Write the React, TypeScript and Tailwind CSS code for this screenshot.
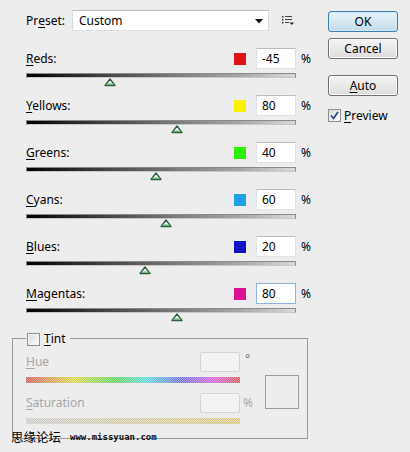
import React from "react";

type Row = { key: string; rest: string; color: string; value: number; focus?: boolean };

const rows: Row[] = [
  { key: "R", rest: "eds:", color: "#e01212", value: -45 },
  { key: "Y", rest: "ellows:", color: "#f6f200", value: 80 },
  { key: "G", rest: "reens:", color: "#2ef00a", value: 40 },
  { key: "C", rest: "yans:", color: "#1fa3e2", value: 60 },
  { key: "B", rest: "lues:", color: "#0c12c6", value: 20 },
  { key: "M", rest: "agentas:", color: "#dc1090", value: 80, focus: true },
];

function Thumb() {
  return (
    <svg width="12" height="9" viewBox="0 0 12 9">
      <path d="M6 1 L1 7.5 L11 7.5 Z" fill="#eef6ee" stroke="#2f5e3e" strokeWidth="1.3" strokeLinejoin="round" />
      <path d="M3 5.6 L9 5.6 L10 6.9 L2 6.9 Z" fill="#6fb87a" />
    </svg>
  );
}

function SliderRow({ r }: { r: Row }) {
  const left = ((r.value + 200) / 500) * 270 - 6;
  return (
    <div className="h-[47px] ml-[26px] pt-[1px]">
      <div className="flex items-center h-[21px]">
        <div className="w-[208px] text-black">
          <span className="underline underline-offset-2">{r.key}</span>
          {r.rest}
        </div>
        <div className="w-[12px] h-[12px]" style={{ backgroundColor: r.color }} />
        <div
          className={
            "ml-[10px] w-[40px] h-[21px] bg-white border flex items-center pl-[5px] " +
            (r.focus ? "border-[#8fb3dc]" : "border-[#dfe3e8] border-t-[#b8bcc2]")
          }
        >
          {r.value}
        </div>
        <div className="ml-[5px]">%</div>
      </div>
      <div className="relative mt-[4px] w-[270px] h-[5px] border border-[#8a8a8a] border-b-[#c8c8c8] bg-[linear-gradient(to_right,#000000,#3a3a3a_25%,#7a7a7a_55%,#a8a8a8_80%,#dadada)]">
        <div className="absolute top-[4px] leading-none" style={{ left: left - 1 }}>
          <Thumb />
        </div>
      </div>
    </div>
  );
}

function Button({ children, primary }: { children: React.ReactNode; primary?: boolean }) {
  return (
    <div
      className={
        "w-[70px] h-[21px] rounded-[3px] border flex items-center justify-center text-black " +
        (primary
          ? "border-[#3c7fb1] bg-[linear-gradient(to_bottom,#eaf3f9,#d6e7f2_50%,#c3dcec)] shadow-[inset_0_0_0_1px_#cfe9f7]"
          : "border-[#707070] bg-[linear-gradient(to_bottom,#f4f4f4,#e9e9e9_50%,#dcdcdc)] shadow-[inset_0_0_0_1px_#fbfbfb]")
      }
    >
      {children}
    </div>
  );
}

export default function App() {
  return (
    <div className="relative w-[410px] h-[452px] overflow-hidden bg-[#ededed] font-['Segoe_UI','Noto_Sans',sans-serif] text-[12px] text-black leading-none">
      <div className="flex items-start">
        {/* left */}
        <div className="w-[318px] shrink-0">
          <div className="h-[47px] pt-[10px] pl-[26px] flex items-start">
            <div className="h-[21px] flex items-center w-[46px]">
              Pr<span className="underline underline-offset-2">e</span>set:
            </div>
            <div className="w-[197px] h-[21px] bg-white border border-[#dadde2] border-t-[#b9bdc3] flex items-center pl-[6px] relative">
              Custom
              <svg className="absolute right-[5px] top-[8px]" width="8" height="5" viewBox="0 0 8 5">
                <path d="M0 0 L8 0 L4 4.5 Z" fill="#111" />
              </svg>
            </div>
            <div className="ml-[13px] mt-[5px]">
              <svg width="12" height="11" viewBox="0 0 12 11">
                <rect x="0" y="1" width="1.5" height="1.5" fill="#333" />
                <rect x="3" y="1" width="7" height="1" fill="#444" />
                <rect x="0" y="4" width="1.5" height="1.5" fill="#333" />
                <rect x="3" y="4" width="7" height="1" fill="#444" />
                <rect x="0" y="7" width="1.5" height="1.5" fill="#333" />
                <rect x="3" y="7" width="4" height="1" fill="#444" />
                <path d="M7.5 7.5 L12 7.5 L9.75 10 Z" fill="#222" />
              </svg>
            </div>
          </div>

          {rows.map((r) => (
            <SliderRow key={r.key} r={r} />
          ))}

          {/* Tint group */}
          <div className="relative ml-[12px] mt-[9px] w-[296px] h-[101px] border border-[#999999]">
            <div className="absolute -top-[7px] left-[13px] bg-[#ededed] flex items-center pr-[4px] pl-[1px] h-[14px]">
              <div className="w-[13px] h-[13px] border border-[#8e8f8f] bg-[linear-gradient(135deg,#dcdcdc,#fbfbfb)] shadow-[inset_0_0_0_1px_#f4f4f4]" />
              <div className="ml-[4px]">
                <span className="underline underline-offset-2">T</span>int
              </div>
            </div>
            <div className="flex pl-[13px] pt-[13px]">
              <div className="w-[239px] text-[#a6a6a6]">
                <div className="flex items-center h-[20px]">
                  <div className="w-[174px]">
                    <span className="underline underline-offset-2">H</span>ue
                  </div>
                  <div className="w-[40px] h-[20px] rounded-[2px] border border-[#d2d4d8] bg-[#f3f3f3]" />
                  <div className="ml-[5px] -mt-[6px] text-[#777]">°</div>
                </div>
                <div className="relative mt-[5px] w-[214px] h-[6px] bg-[linear-gradient(to_right,#c85a5a,#dcd44a_22%,#5cd05c_42%,#5cd8d8_56%,#6c6ce4_72%,#d45ed4_88%,#d05656)]">
                  <div className="absolute inset-0 bg-[repeating-conic-gradient(#ffffff66_0_25%,transparent_0_50%)] bg-[length:2px_2px]" />
                </div>
                <div className="flex items-center h-[20px] mt-[10px]">
                  <div className="w-[174px]">
                    <span className="underline underline-offset-2">S</span>aturation
                  </div>
                  <div className="w-[40px] h-[20px] rounded-[2px] border border-[#d2d4d8] bg-[#f3f3f3]" />
                  <div className="ml-[3px]">%</div>
                </div>
                <div className="relative mt-[5px] w-[214px] h-[6px] bg-[linear-gradient(to_right,#cccccc,#d8c880)]">
                  <div className="absolute inset-0 bg-[repeating-conic-gradient(#ffffff66_0_25%,transparent_0_50%)] bg-[length:2px_2px]" />
                </div>
              </div>
              <div className="mt-[23px] w-[34px] h-[34px] border border-[#9c9c9c]" />
            </div>
          </div>
        </div>

        {/* right */}
        <div className="ml-[10px] pt-[11px] flex flex-col">
          <Button primary>OK</Button>
          <div className="mt-[6px]">
            <Button>Cancel</Button>
          </div>
          <div className="mt-[16px]">
            <Button>
              <span className="underline underline-offset-2">A</span>uto
            </Button>
          </div>
          <div className="mt-[13px] flex items-center">
            <div className="w-[13px] h-[13px] border border-[#8e8f8f] bg-[linear-gradient(135deg,#dcdcdc,#fbfbfb)] flex items-center justify-center">
              <svg width="9" height="9" viewBox="0 0 9 9">
                <path d="M1 4.5 L3.5 7.5 L8 1" fill="none" stroke="#21417a" strokeWidth="1.6" />
              </svg>
            </div>
            <div className="ml-[3px]">
              <span className="underline underline-offset-2">P</span>review
            </div>
          </div>
        </div>
      </div>

      {/* watermark overlay */}
      <div className="absolute left-[11px] top-[431px] flex items-center">
        <span className="font-['Noto_Sans_CJK_SC',sans-serif] text-[12.5px] text-black">思缘论坛</span>
        <span className="ml-[9px] font-['DejaVu_Sans_Mono',monospace] font-bold text-[9px] text-[#111]">
          www.missyuan.com
        </span>
      </div>
    </div>
  );
}
